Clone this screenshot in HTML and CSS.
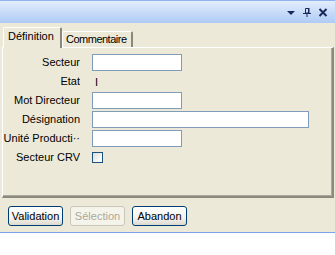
FILE: index.html
```html
<!DOCTYPE html>
<html>
<head>
<meta charset="utf-8">
<link rel="stylesheet" href="styles.css">
</head>
<body>
<div class="window">
  <div class="titlebar">
    <svg class="ico" width="10" height="9" viewBox="0 0 10 9"><polygon points="1,3 9,3 5,7" fill="#18285a"/></svg>
    <svg class="ico" width="10" height="9" viewBox="0 0 10 9"><path d="M3.5 0.5h3v4.5h-3z" fill="none" stroke="#18285a" stroke-width="1"/><rect x="6" y="0" width="1.5" height="5" fill="#18285a"/><rect x="1" y="5" width="8" height="1" fill="#18285a"/><rect x="4.5" y="6" width="1" height="3" fill="#18285a"/></svg>
    <svg class="ico" width="10" height="9" viewBox="0 0 10 9"><path d="M1.5 1L8.5 8M8.5 1L1.5 8" stroke="#18285a" stroke-width="2"/></svg>
  </div>
  <div class="tabs">
    <div class="tab active">Définition</div>
    <div class="tab">Commentaire</div>
  </div>
  <div class="panel">
    <div class="form">
      <label class="lbl">Secteur</label><div class="field"><span class="input w90"></span></div>
      <label class="lbl">Etat</label><div class="field"><span class="val">I</span></div>
      <label class="lbl">Mot Directeur</label><div class="field"><span class="input w90"></span></div>
      <label class="lbl">Désignation</label><div class="field"><span class="input w217"></span></div>
      <label class="lbl">Unité Producti··</label><div class="field"><span class="input w90"></span></div>
      <label class="lbl">Secteur CRV</label><div class="field"><span class="check"></span></div>
    </div>
  </div>
  <div class="buttons">
    <button class="btn">Validation</button>
    <button class="btn disabled">Sélection</button>
    <button class="btn">Abandon</button>
  </div>
</div>
<div class="below"></div>
</body>
</html>
```

FILE: styles.css
```css
html, body {
  margin: 0;
  padding: 0;
  background: #ffffff;
  font-family: "Liberation Sans", Arial, sans-serif;
  font-size: 11px;
  color: #000;
}
.window {
  background: #ece9d8;
  height: 232px;
  border-bottom: 1px solid #7da2ea;
  display: flex;
  flex-direction: column;
}
.titlebar {
  height: 22px;
  border-top: 1px solid #8fb2ec;
  background: linear-gradient(to bottom, #e3edfc 0%, #c9dcf8 50%, #aecbf5 100%);
  display: flex;
  justify-content: flex-end;
  align-items: center;
  gap: 6px;
  padding-right: 7px;
}
.ico { display: block; }
.tabs {
  display: flex;
  align-items: flex-end;
  height: 24px;
  padding-left: 3px;
}
.tab {
  box-sizing: border-box;
  height: 16px;
  width: 71px;
  border-top: 1px solid #ffffff;
  border-left: 1px solid #ffffff;
  border-right: 2px solid #8a887a;
  border-top-left-radius: 2px;
  border-top-right-radius: 2px;
  padding-left: 3px;
  line-height: 14px;
  letter-spacing: -0.5px;
  white-space: nowrap;
  overflow: hidden;
  background: #ece9d8;
}
.tab.active {
  width: 59px;
  height: 21px;
  padding-left: 4px;
  line-height: 17px;
  letter-spacing: 0;
  position: relative;
  z-index: 1;
  margin-bottom: -1px;
}
.panel {
  box-sizing: border-box;
  margin: 0 1px 0 2px;
  height: 151px;
  border-top: 1px solid #ffffff;
  border-left: 1px solid #ffffff;
  border-right: 2px solid #8c8a7e;
  border-bottom: 2px solid #8c8a7e;
  box-shadow: inset -1px -1px 0 #aca899;
  padding-top: 6px;
}
.form {
  display: grid;
  grid-template-columns: 77px 1fr;
  grid-auto-rows: 17px;
  column-gap: 12px;
  row-gap: 2px;
}
.lbl {
  text-align: right;
  white-space: nowrap;
  overflow: hidden;
  line-height: 17px;
}
.field {
  display: flex;
  align-items: center;
}
.input {
  box-sizing: border-box;
  display: block;
  height: 17px;
  background: #fff;
  border: 1px solid #7f9db9;
}
.w90 { width: 90px; }
.w217 { width: 217px; }
.val { padding-left: 3px; }
.check {
  box-sizing: border-box;
  display: block;
  width: 11px;
  height: 11px;
  border: 1px solid #1c5180;
  background: linear-gradient(135deg, #dcdcd7 0%, #ffffff 90%);
}
.buttons {
  display: flex;
  gap: 7px;
  padding: 8px 0 0 8px;
}
.btn {
  box-sizing: border-box;
  height: 20px;
  width: 55px;
  padding: 0;
  font-family: "Liberation Sans", Arial, sans-serif;
  font-size: 11px;
  color: #000;
  border: 1px solid #003c74;
  border-radius: 3px;
  background: linear-gradient(to bottom, #ffffff 0%, #f4f3ee 60%, #dcdad0 100%);
}
.btn.disabled {
  color: #aca899;
  border-color: #c9c7ba;
  background: #f5f4ea;
}
.below {
  height: 22px;
  background: #fff;
}
```
